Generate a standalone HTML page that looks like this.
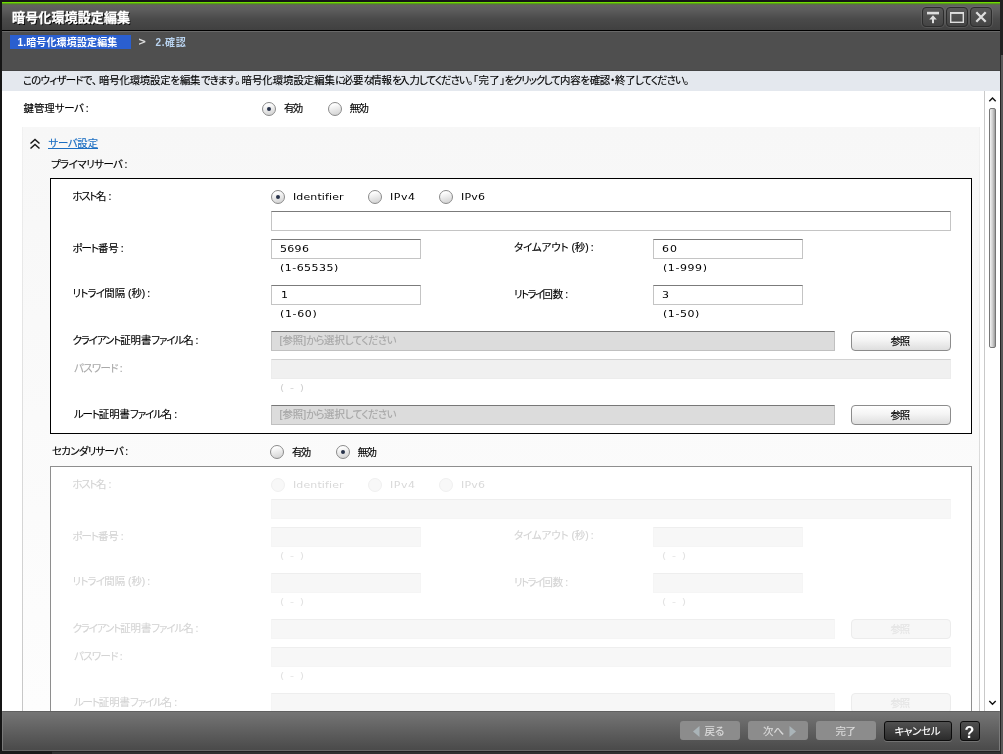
<!DOCTYPE html>
<html lang="ja">
<head>
<meta charset="utf-8">
<title>暗号化環境設定編集</title>
<style>
html,body{margin:0;padding:0;}
body{width:1003px;height:754px;overflow:hidden;background:#151515;position:relative;
 font-family:"Liberation Sans","Noto Sans CJK JP",sans-serif;font-size:11px;color:#000;}
div,svg{position:absolute;box-sizing:border-box;}
.t{white-space:nowrap;line-height:14px;height:14px;}
#win{left:2px;top:2px;width:998px;height:749px;background:#fff;}
#bstrip{left:0;top:751px;width:1003px;height:3px;background:#303030;border-top:1px solid #202020;}
#bstrip2{left:0;top:751px;width:52px;height:3px;background:#1a1a1a;}
#titlebar{left:2px;top:2px;width:998px;height:28px;
 background:linear-gradient(#6fdc00 0,#6fdc00 1px,#5a9a20 1px,#5a9a20 2px,#5b6f45 2px,#5b6f45 3px,#626262 3px,#5c5c5c 8px,#4a4a4a 17px,#404040 28px);}
#titleline{left:2px;top:30px;width:998px;height:1px;background:#000;}
#crumb{left:2px;top:31px;width:998px;height:40px;background:#4f4f4f;border-top:1px solid #696969;border-bottom:1px solid #454545;}
#tab{left:10px;top:35px;width:121px;height:14px;background:#2a5fd0;}
#info{left:2px;top:71px;width:998px;height:20px;background:#e4e8ee;}
#footer{left:2px;top:711px;width:998px;height:40px;
 background:linear-gradient(#757575 0,#6e6e6e 6px,#5c5c5c 22px,#4b4b4b 37px);border:1px solid #7a7a7a;border-top-color:#606060;border-bottom-color:#686868;}
#rstrip{left:1000px;top:0;width:3px;height:754px;background:#585858;border-left:1px solid #262626;}
#rstrip2{left:1000px;top:0;width:3px;height:55px;background:#222;}
.wb{top:7px;width:22px;height:20px;border:1px solid #2c2c2c;border-radius:4px;background:linear-gradient(#5a5a5a,#444);box-shadow:0 0 0 1px rgba(120,120,120,.35);}
/* section */
#sec{left:22px;top:127px;width:958px;height:584px;background:linear-gradient(#f7f7f7,#fafafa 50%,#fdfdfd);}
.secb{top:127px;width:1px;height:584px;background:linear-gradient(#f1f1f1,#dedede 50%,#c6c6c6);}
.box{left:50px;width:922px;background:#fff;border:1px solid #000;}
.inp{height:20px;background:#fff;border:1px solid #c4c4c4;border-top-color:#7b7b7b;}
.inp.ro{background:#dcdcdc;border-color:#c0c0c0;border-top-color:#777;}
.inp.dis{background:#f0f0f0;border-color:#ececec;border-top-color:#d2d2d2;}
.inp.dd{background:#f7f7f7;border-color:#f5f5f5;border-top-color:#eeeeee;}
.btn{width:100px;height:20px;border:1px solid #8c8c8c;border-radius:4px;background:linear-gradient(#ffffff 0,#f4f4f4 45%,#dedede 100%);}
.btn.dd{border-color:#ececec;background:#f7f7f7;}
.rd{width:14px;height:14px;border-radius:50%;border:1px solid #8a8a8a;background:linear-gradient(165deg,#ffffff 15%,#e8e8e8 55%,#cfcfcf 100%);}
.rd.on::after{content:"";position:absolute;left:4px;top:4px;width:4px;height:4px;border-radius:50%;background:#27324a;}
.rd.dd{border-color:#f0f0f0;background:#f8f8f8;}
.fb{top:721px;height:19px;border-radius:3px;background:#8c8c8c;}
.fbk{top:721px;height:20px;border-radius:3px;border:1px solid #0c0c0c;background:linear-gradient(#515151,#2b2b2b);box-shadow:0 1px 0 rgba(255,255,255,.18);}
</style>
</head>
<body>
<div id="win"></div>
<div id="titlebar"></div>
<div id="titleline"></div>
<div id="crumb"></div>
<div id="tab"></div>
<div id="info"></div>
<div id="bstrip"></div><div id="bstrip2"></div><div id="rstrip"></div><div id="rstrip2"></div>

<!-- window buttons -->
<div class="wb" style="left:922px"></div>
<div class="wb" style="left:946px"></div>
<div class="wb" style="left:970px"></div>
<svg style="left:922px;top:7px" width="70" height="20" viewBox="0 0 70 20">
 <g fill="#dedede" stroke="none">
  <rect x="5" y="4.800" width="12" height="2.600"/>
  <rect x="10" y="11.500" width="2" height="4.700"/>
  <path d="M11 8.300l3.800 4.200h-7.600z"/>
 </g>
 <g fill="none" stroke="#dedede">
  <rect x="28.700" y="5.700" width="12.600" height="9.600" stroke-width="1.400"/>
  <path d="M28 6h14" stroke-width="1.800"/>
  <path d="M54.300 5.300l9.400 9.400M63.700 5.300l-9.400 9.400" stroke-width="2.300"/>
 </g>
</svg>

<!-- content -->
<div id="sec"></div><div class="secb" style="left:22px"></div><div class="secb" style="left:979px"></div>
<div class="rd on" style="left:262px;top:102px"></div>
<div class="rd" style="left:328px;top:102px"></div>
<svg style="left:29px;top:138px" width="12" height="12" viewBox="0 0 12 12"><path d="M1.500 5.500L6 1.500l4.500 4M1.500 10.500L6 6.500l4.500 4" fill="none" stroke="#1a1a1a" stroke-width="1.500"/></svg>
<div style="left:48px;top:148px;width:50px;height:1px;background:#1b6ec2"></div>

<!-- primary -->
<div class="box" style="top:178px;height:256px"></div>
<div class="rd on" style="left:271px;top:190px"></div>
<div class="rd" style="left:368px;top:190px"></div>
<div class="rd" style="left:439px;top:190px"></div>
<div class="inp" style="left:271px;top:211px;width:680px"></div>
<div class="inp" style="left:271px;top:239px;width:150px"></div>
<div class="inp" style="left:653px;top:239px;width:150px"></div>
<div class="inp" style="left:271px;top:285px;width:150px"></div>
<div class="inp" style="left:653px;top:285px;width:150px"></div>
<div class="inp ro" style="left:271px;top:331px;width:564px"></div>
<div class="btn" style="left:851px;top:331px"></div>
<div class="inp dis" style="left:271px;top:359px;width:680px"></div>
<div class="inp ro" style="left:271px;top:405px;width:564px"></div>
<div class="btn" style="left:851px;top:405px"></div>

<!-- secondary -->
<div class="rd" style="left:270px;top:445px"></div>
<div class="rd on" style="left:336px;top:445px"></div>
<div class="box" style="top:466px;height:256px;border-color:#8e8e8e"></div>
<div class="rd dd" style="left:271px;top:478px"></div>
<div class="rd dd" style="left:368px;top:478px"></div>
<div class="rd dd" style="left:439px;top:478px"></div>
<div class="inp dd" style="left:271px;top:499px;width:680px"></div>
<div class="inp dd" style="left:271px;top:527px;width:150px"></div>
<div class="inp dd" style="left:653px;top:527px;width:150px"></div>
<div class="inp dd" style="left:271px;top:573px;width:150px"></div>
<div class="inp dd" style="left:653px;top:573px;width:150px"></div>
<div class="inp dd" style="left:271px;top:619px;width:564px"></div>
<div class="btn dd" style="left:851px;top:619px"></div>
<div class="inp dd" style="left:271px;top:647px;width:680px"></div>
<div class="inp dd" style="left:271px;top:693px;width:564px"></div>
<div class="btn dd" style="left:851px;top:693px"></div>

<!-- scrollbar -->
<div style="left:980px;top:91px;width:20px;height:620px;background:#fff"></div>
<div style="left:984px;top:91px;width:1px;height:620px;background:#c9c9c9"></div>
<svg style="left:988px;top:96px" width="9" height="6" viewBox="0 0 9 6"><path d="M1.300 5.200L4.500 2l3.200 3.200" fill="none" stroke="#111" stroke-width="1.400"/></svg>
<svg style="left:988px;top:700px" width="9" height="6" viewBox="0 0 9 6"><path d="M1.300 1L4.500 4.200L7.700 1" fill="none" stroke="#111" stroke-width="1.400"/></svg>
<div style="left:989px;top:108px;width:7px;height:240px;border:1px solid #777;border-radius:2px;background:linear-gradient(90deg,#f4f4f4,#cfcfcf 50%,#9c9c9c)"></div>

<!-- footer -->
<div id="footer"></div>
<div class="fb" style="left:680px;width:60px"></div>
<div class="fb" style="left:748px;width:60px"></div>
<div class="fb" style="left:816px;width:60px"></div>
<div class="fbk" style="left:884px;width:68px"></div>
<div class="fbk" style="left:960px;width:20px"></div>
<svg style="left:693px;top:726px" width="7" height="11" viewBox="0 0 7 11"><path d="M6.500 0v11L0 5.500z" fill="#aab4b8"/></svg>
<svg style="left:789px;top:726px" width="7" height="11" viewBox="0 0 7 11"><path d="M0.500 0v11L7 5.500z" fill="#aab4b8"/></svg>

<div id="txt" style="left:0;top:0;width:1003px;height:754px;will-change:transform">
<div class="t" style="left:12.0px;top:11px;font-family:'Liberation Sans','Noto Sans CJK JP',sans-serif;font-size:13px;color:#fff;font-weight:bold;text-shadow:1px 1px 0 #000;-webkit-text-stroke:0.3px #fff;font-feature-settings:'palt';letter-spacing:0.125px;">暗号化環境設定編集</div>
<div class="t" style="left:17.5px;top:36px;font-family:'Liberation Sans','Noto Sans CJK JP',sans-serif;font-size:10px;color:#fff;font-weight:bold;font-feature-settings:'palt';letter-spacing:0.150px;">1.暗号化環境設定編集</div>
<div class="t" style="left:138.0px;top:35px;font-family:'DejaVu Sans','Noto Sans CJK JP',sans-serif;font-size:10px;color:#e0e0e0;font-weight:bold;letter-spacing:0.000px;">&gt;</div>
<div class="t" style="left:155.5px;top:36px;font-family:'Liberation Sans','Noto Sans CJK JP',sans-serif;font-size:10px;color:#b9d3ef;font-weight:bold;font-feature-settings:'palt';letter-spacing:0.633px;">2.確認</div>
<div class="t" style="left:23.0px;top:74px;font-family:'Liberation Sans','Noto Sans CJK JP',sans-serif;font-size:10.4px;color:#000;font-feature-settings:'palt';-webkit-text-stroke:0.15px;letter-spacing:0.000px;"><span style="letter-spacing:-0.713px">このウィザードで</span>、</div>
<div class="t" style="left:99.0px;top:74px;font-family:'Liberation Sans','Noto Sans CJK JP',sans-serif;font-size:10.4px;color:#000;font-feature-settings:'palt';-webkit-text-stroke:0.15px;letter-spacing:-0.178px;">暗号化環境設定を編集</div>
<div class="t" style="left:201.0px;top:74px;font-family:'Liberation Sans','Noto Sans CJK JP',sans-serif;font-size:10.4px;color:#000;font-feature-settings:'palt';-webkit-text-stroke:0.15px;letter-spacing:0.000px;"><span style="letter-spacing:-0.900px">できます</span>。</div>
<div class="t" style="left:241.5px;top:74px;font-family:'Liberation Sans','Noto Sans CJK JP',sans-serif;font-size:10.4px;color:#000;font-feature-settings:'palt';-webkit-text-stroke:0.15px;letter-spacing:0.000px;">暗号化環境設定編集<span style="letter-spacing:-2.400px">に</span>必要<span style="letter-spacing:-2.400px">な</span>情報<span style="letter-spacing:-2.400px">を</span>入力</div>
<div class="t" style="left:419.0px;top:74px;font-family:'Liberation Sans','Noto Sans CJK JP',sans-serif;font-size:10.4px;color:#000;font-feature-settings:'palt';-webkit-text-stroke:0.15px;letter-spacing:0.000px;"><span style="letter-spacing:-0.933px">してください</span>。</div>
<div class="t" style="left:473.0px;top:74px;font-family:'Liberation Sans','Noto Sans CJK JP',sans-serif;font-size:10.4px;color:#000;font-feature-settings:'palt';-webkit-text-stroke:0.15px;letter-spacing:0.333px;">「完了」</div>
<div class="t" style="left:504.5px;top:74px;font-family:'Liberation Sans','Noto Sans CJK JP',sans-serif;font-size:10.4px;color:#000;font-feature-settings:'palt';-webkit-text-stroke:0.15px;letter-spacing:0.000px;"><span style="letter-spacing:-1.100px">をクリックして</span></div>
<div class="t" style="left:560.0px;top:74px;font-family:'Liberation Sans','Noto Sans CJK JP',sans-serif;font-size:10.4px;color:#000;font-feature-settings:'palt';-webkit-text-stroke:0.15px;letter-spacing:-0.229px;">内容を確認・終了</div>
<div class="t" style="left:635.0px;top:74px;font-family:'Liberation Sans','Noto Sans CJK JP',sans-serif;font-size:10.4px;color:#000;font-feature-settings:'palt';-webkit-text-stroke:0.15px;letter-spacing:0.000px;"><span style="letter-spacing:-0.933px">してください</span>。</div>
<div class="t" style="left:23.5px;top:102px;font-family:'Liberation Sans','Noto Sans CJK JP',sans-serif;font-size:10.4px;color:#000;font-feature-settings:'palt';-webkit-text-stroke:0.15px;letter-spacing:0.000px;">鍵管理<span style="letter-spacing:-0.267px">サーバ</span><span style="margin-left:2px;letter-spacing:0">:</span></div>
<div class="t" style="left:284.0px;top:102px;font-family:'Liberation Sans','Noto Sans CJK JP',sans-serif;font-size:10.4px;color:#000;font-feature-settings:'palt';-webkit-text-stroke:0.15px;letter-spacing:-1.600px;">有効</div>
<div class="t" style="left:349.5px;top:102px;font-family:'Liberation Sans','Noto Sans CJK JP',sans-serif;font-size:10.4px;color:#000;font-feature-settings:'palt';-webkit-text-stroke:0.15px;letter-spacing:-1.300px;">無効</div>
<div class="t" style="left:48.5px;top:137px;font-family:'Liberation Sans','Noto Sans CJK JP',sans-serif;font-size:10.4px;color:#1b6ec2;font-feature-settings:'palt';-webkit-text-stroke:0.15px;letter-spacing:0.000px;"><span style="letter-spacing:-0.300px">サーバ</span>設定</div>
<div class="t" style="left:51.0px;top:158px;font-family:'Liberation Sans','Noto Sans CJK JP',sans-serif;font-size:10.4px;color:#000;font-feature-settings:'palt';-webkit-text-stroke:0.15px;letter-spacing:0.000px;"><span style="letter-spacing:-0.463px">プライマリサーバ</span><span style="margin-left:2px;letter-spacing:0">:</span></div>
<div class="t" style="left:72.5px;top:190px;font-family:'Liberation Sans','Noto Sans CJK JP',sans-serif;font-size:10.4px;color:#000;font-feature-settings:'palt';-webkit-text-stroke:0.15px;letter-spacing:0.000px;"><span style="letter-spacing:-1.267px">ホスト</span>名<span style="margin-left:2px;letter-spacing:0">:</span></div>
<div class="t" style="left:293.0px;top:190px;font-family:'DejaVu Sans','Noto Sans CJK JP',sans-serif;font-size:9.3px;color:#000;transform:scaleX(1.18);transform-origin:0 0;letter-spacing:0.113px;">Identifier</div>
<div class="t" style="left:389.5px;top:190px;font-family:'DejaVu Sans','Noto Sans CJK JP',sans-serif;font-size:9.3px;color:#000;transform:scaleX(1.18);transform-origin:0 0;letter-spacing:0.480px;">IPv4</div>
<div class="t" style="left:460.5px;top:190px;font-family:'DejaVu Sans','Noto Sans CJK JP',sans-serif;font-size:9.3px;color:#000;transform:scaleX(1.18);transform-origin:0 0;letter-spacing:0.198px;">IPv6</div>
<div class="t" style="left:72.5px;top:242px;font-family:'Liberation Sans','Noto Sans CJK JP',sans-serif;font-size:10.4px;color:#000;font-feature-settings:'palt';-webkit-text-stroke:0.15px;letter-spacing:0.000px;"><span style="letter-spacing:-0.933px">ポート</span>番号<span style="margin-left:2px;letter-spacing:0">:</span></div>
<div class="t" style="left:514.0px;top:241px;font-family:'Liberation Sans','Noto Sans CJK JP',sans-serif;font-size:10.4px;color:#000;font-feature-settings:'palt';-webkit-text-stroke:0.15px;letter-spacing:0.000px;"><span style="letter-spacing:-0.050px">タイムアウト</span> (秒)<span style="margin-left:2px;letter-spacing:0">:</span></div>
<div class="t" style="left:72.5px;top:287px;font-family:'Liberation Sans','Noto Sans CJK JP',sans-serif;font-size:10.4px;color:#000;font-feature-settings:'palt';-webkit-text-stroke:0.15px;letter-spacing:0.000px;"><span style="letter-spacing:-0.725px">リトライ</span>間隔 (秒)<span style="margin-left:2px;letter-spacing:0">:</span></div>
<div class="t" style="left:514.0px;top:288px;font-family:'Liberation Sans','Noto Sans CJK JP',sans-serif;font-size:10.4px;color:#000;font-feature-settings:'palt';-webkit-text-stroke:0.15px;letter-spacing:0.000px;"><span style="letter-spacing:-1.550px">リトライ</span>回数<span style="margin-left:2px;letter-spacing:0">:</span></div>
<div class="t" style="left:72.5px;top:334px;font-family:'Liberation Sans','Noto Sans CJK JP',sans-serif;font-size:10.4px;color:#000;font-feature-settings:'palt';-webkit-text-stroke:0.15px;letter-spacing:0.000px;"><span style="letter-spacing:-1.040px">クライアント</span>証明書<span style="letter-spacing:-1.040px">ファイル</span>名<span style="margin-left:2px;letter-spacing:0">:</span></div>
<div class="t" style="left:74.0px;top:362px;font-family:'Liberation Sans','Noto Sans CJK JP',sans-serif;font-size:10.4px;color:#a9a9a9;font-feature-settings:'palt';-webkit-text-stroke:0.15px;letter-spacing:0.000px;"><span style="letter-spacing:-0.620px">パスワード</span><span style="margin-left:2px;letter-spacing:0">:</span></div>
<div class="t" style="left:74.0px;top:408px;font-family:'Liberation Sans','Noto Sans CJK JP',sans-serif;font-size:10.4px;color:#000;font-feature-settings:'palt';-webkit-text-stroke:0.15px;letter-spacing:0.000px;"><span style="letter-spacing:-1.043px">ルート</span>証明書<span style="letter-spacing:-1.043px">ファイル</span>名<span style="margin-left:2px;letter-spacing:0">:</span></div>
<div class="t" style="left:279.5px;top:242px;font-family:'DejaVu Sans','Noto Sans CJK JP',sans-serif;font-size:9.3px;color:#000;transform:scaleX(1.18);transform-origin:0 0;letter-spacing:0.282px;">5696</div>
<div class="t" style="left:280.0px;top:261px;font-family:'DejaVu Sans','Noto Sans CJK JP',sans-serif;font-size:9.3px;color:#000;transform:scaleX(1.18);transform-origin:0 0;letter-spacing:0.403px;">(1-65535)</div>
<div class="t" style="left:661.5px;top:242px;font-family:'DejaVu Sans','Noto Sans CJK JP',sans-serif;font-size:9.3px;color:#000;transform:scaleX(1.18);transform-origin:0 0;letter-spacing:0.847px;">60</div>
<div class="t" style="left:662.5px;top:261px;font-family:'DejaVu Sans','Noto Sans CJK JP',sans-serif;font-size:9.3px;color:#000;transform:scaleX(1.18);transform-origin:0 0;letter-spacing:0.494px;">(1-999)</div>
<div class="t" style="left:280.5px;top:288px;font-family:'DejaVu Sans','Noto Sans CJK JP',sans-serif;font-size:9.3px;color:#000;transform:scaleX(1.18);transform-origin:0 0;letter-spacing:0.000px;">1</div>
<div class="t" style="left:280.0px;top:307px;font-family:'DejaVu Sans','Noto Sans CJK JP',sans-serif;font-size:9.3px;color:#000;transform:scaleX(1.18);transform-origin:0 0;letter-spacing:0.559px;">(1-60)</div>
<div class="t" style="left:662.0px;top:288px;font-family:'DejaVu Sans','Noto Sans CJK JP',sans-serif;font-size:9.3px;color:#000;transform:scaleX(1.18);transform-origin:0 0;letter-spacing:0.000px;">3</div>
<div class="t" style="left:662.5px;top:307px;font-family:'DejaVu Sans','Noto Sans CJK JP',sans-serif;font-size:9.3px;color:#000;transform:scaleX(1.18);transform-origin:0 0;letter-spacing:0.492px;">(1-50)</div>
<div class="t" style="left:279.5px;top:334px;font-family:'Liberation Sans','Noto Sans CJK JP',sans-serif;font-size:10.4px;color:#a6a6a6;font-feature-settings:'palt';-webkit-text-stroke:0.15px;letter-spacing:0.000px;">[参照]<span style="letter-spacing:-0.557px">から</span>選択<span style="letter-spacing:-0.557px">してください</span></div>
<div class="t" style="left:279.5px;top:408px;font-family:'Liberation Sans','Noto Sans CJK JP',sans-serif;font-size:10.4px;color:#a6a6a6;font-feature-settings:'palt';-webkit-text-stroke:0.15px;letter-spacing:0.000px;">[参照]<span style="letter-spacing:-0.557px">から</span>選択<span style="letter-spacing:-0.557px">してください</span></div>
<div class="t" style="left:280.0px;top:381px;font-family:'DejaVu Sans','Noto Sans CJK JP',sans-serif;font-size:9.3px;color:#cfcfcf;transform:scaleX(1.18);transform-origin:0 0;letter-spacing:0.953px;">( - )</div>
<div class="t" style="left:890.5px;top:335px;font-family:'Liberation Sans','Noto Sans CJK JP',sans-serif;font-size:10.4px;color:#000;font-feature-settings:'palt';-webkit-text-stroke:0.15px;letter-spacing:-1.100px;">参照</div>
<div class="t" style="left:890.5px;top:409px;font-family:'Liberation Sans','Noto Sans CJK JP',sans-serif;font-size:10.4px;color:#000;font-feature-settings:'palt';-webkit-text-stroke:0.15px;letter-spacing:-1.100px;">参照</div>
<div class="t" style="left:52.0px;top:445px;font-family:'Liberation Sans','Noto Sans CJK JP',sans-serif;font-size:10.4px;color:#000;font-feature-settings:'palt';-webkit-text-stroke:0.15px;letter-spacing:0.000px;"><span style="letter-spacing:-0.650px">セカンダリサーバ</span><span style="margin-left:2px;letter-spacing:0">:</span></div>
<div class="t" style="left:292.0px;top:446px;font-family:'Liberation Sans','Noto Sans CJK JP',sans-serif;font-size:10.4px;color:#000;font-feature-settings:'palt';-webkit-text-stroke:0.15px;letter-spacing:-1.600px;">有効</div>
<div class="t" style="left:357.5px;top:446px;font-family:'Liberation Sans','Noto Sans CJK JP',sans-serif;font-size:10.4px;color:#000;font-feature-settings:'palt';-webkit-text-stroke:0.15px;letter-spacing:-1.300px;">無効</div>
<div class="t" style="left:72.5px;top:478px;font-family:'Liberation Sans','Noto Sans CJK JP',sans-serif;font-size:10.4px;color:#d4d4d4;font-feature-settings:'palt';-webkit-text-stroke:0.15px;letter-spacing:0.000px;"><span style="letter-spacing:-1.267px">ホスト</span>名<span style="margin-left:2px;letter-spacing:0">:</span></div>
<div class="t" style="left:293.0px;top:478px;font-family:'DejaVu Sans','Noto Sans CJK JP',sans-serif;font-size:9.3px;color:#d9d9d9;transform:scaleX(1.18);transform-origin:0 0;letter-spacing:0.113px;">Identifier</div>
<div class="t" style="left:389.5px;top:478px;font-family:'DejaVu Sans','Noto Sans CJK JP',sans-serif;font-size:9.3px;color:#d9d9d9;transform:scaleX(1.18);transform-origin:0 0;letter-spacing:0.480px;">IPv4</div>
<div class="t" style="left:460.5px;top:478px;font-family:'DejaVu Sans','Noto Sans CJK JP',sans-serif;font-size:9.3px;color:#d9d9d9;transform:scaleX(1.18);transform-origin:0 0;letter-spacing:0.198px;">IPv6</div>
<div class="t" style="left:72.5px;top:530px;font-family:'Liberation Sans','Noto Sans CJK JP',sans-serif;font-size:10.4px;color:#d4d4d4;font-feature-settings:'palt';-webkit-text-stroke:0.15px;letter-spacing:0.000px;"><span style="letter-spacing:-0.933px">ポート</span>番号<span style="margin-left:2px;letter-spacing:0">:</span></div>
<div class="t" style="left:514.0px;top:529px;font-family:'Liberation Sans','Noto Sans CJK JP',sans-serif;font-size:10.4px;color:#d4d4d4;font-feature-settings:'palt';-webkit-text-stroke:0.15px;letter-spacing:0.000px;"><span style="letter-spacing:-0.050px">タイムアウト</span> (秒)<span style="margin-left:2px;letter-spacing:0">:</span></div>
<div class="t" style="left:72.5px;top:575px;font-family:'Liberation Sans','Noto Sans CJK JP',sans-serif;font-size:10.4px;color:#d4d4d4;font-feature-settings:'palt';-webkit-text-stroke:0.15px;letter-spacing:0.000px;"><span style="letter-spacing:-0.725px">リトライ</span>間隔 (秒)<span style="margin-left:2px;letter-spacing:0">:</span></div>
<div class="t" style="left:514.0px;top:576px;font-family:'Liberation Sans','Noto Sans CJK JP',sans-serif;font-size:10.4px;color:#d4d4d4;font-feature-settings:'palt';-webkit-text-stroke:0.15px;letter-spacing:0.000px;"><span style="letter-spacing:-1.550px">リトライ</span>回数<span style="margin-left:2px;letter-spacing:0">:</span></div>
<div class="t" style="left:72.5px;top:622px;font-family:'Liberation Sans','Noto Sans CJK JP',sans-serif;font-size:10.4px;color:#d4d4d4;font-feature-settings:'palt';-webkit-text-stroke:0.15px;letter-spacing:0.000px;"><span style="letter-spacing:-1.040px">クライアント</span>証明書<span style="letter-spacing:-1.040px">ファイル</span>名<span style="margin-left:2px;letter-spacing:0">:</span></div>
<div class="t" style="left:74.0px;top:650px;font-family:'Liberation Sans','Noto Sans CJK JP',sans-serif;font-size:10.4px;color:#d4d4d4;font-feature-settings:'palt';-webkit-text-stroke:0.15px;letter-spacing:0.000px;"><span style="letter-spacing:-0.620px">パスワード</span><span style="margin-left:2px;letter-spacing:0">:</span></div>
<div class="t" style="left:74.0px;top:696px;font-family:'Liberation Sans','Noto Sans CJK JP',sans-serif;font-size:10.4px;color:#d4d4d4;font-feature-settings:'palt';-webkit-text-stroke:0.15px;letter-spacing:0.000px;"><span style="letter-spacing:-1.043px">ルート</span>証明書<span style="letter-spacing:-1.043px">ファイル</span>名<span style="margin-left:2px;letter-spacing:0">:</span></div>
<div class="t" style="left:280.0px;top:549px;font-family:'DejaVu Sans','Noto Sans CJK JP',sans-serif;font-size:9.3px;color:#e2e2e2;transform:scaleX(1.18);transform-origin:0 0;letter-spacing:0.953px;">( - )</div>
<div class="t" style="left:662.0px;top:549px;font-family:'DejaVu Sans','Noto Sans CJK JP',sans-serif;font-size:9.3px;color:#e2e2e2;transform:scaleX(1.18);transform-origin:0 0;letter-spacing:0.953px;">( - )</div>
<div class="t" style="left:280.0px;top:595px;font-family:'DejaVu Sans','Noto Sans CJK JP',sans-serif;font-size:9.3px;color:#e2e2e2;transform:scaleX(1.18);transform-origin:0 0;letter-spacing:0.953px;">( - )</div>
<div class="t" style="left:662.0px;top:595px;font-family:'DejaVu Sans','Noto Sans CJK JP',sans-serif;font-size:9.3px;color:#e2e2e2;transform:scaleX(1.18);transform-origin:0 0;letter-spacing:0.953px;">( - )</div>
<div class="t" style="left:280.0px;top:669px;font-family:'DejaVu Sans','Noto Sans CJK JP',sans-serif;font-size:9.3px;color:#e2e2e2;transform:scaleX(1.18);transform-origin:0 0;letter-spacing:0.953px;">( - )</div>
<div class="t" style="left:890.5px;top:623px;font-family:'Liberation Sans','Noto Sans CJK JP',sans-serif;font-size:10.4px;color:#e4e4e4;font-feature-settings:'palt';-webkit-text-stroke:0.15px;letter-spacing:-1.100px;">参照</div>
<div class="t" style="left:890.5px;top:697px;font-family:'Liberation Sans','Noto Sans CJK JP',sans-serif;font-size:10.4px;color:#e4e4e4;font-feature-settings:'palt';-webkit-text-stroke:0.15px;letter-spacing:-1.100px;">参照</div>
<div class="t" style="left:704.5px;top:725px;font-family:'Liberation Sans','Noto Sans CJK JP',sans-serif;font-size:10.4px;color:#dcdcdc;font-feature-settings:'palt';-webkit-text-stroke:0.15px;letter-spacing:0.000px;">戻る</div>
<div class="t" style="left:763.0px;top:725px;font-family:'Liberation Sans','Noto Sans CJK JP',sans-serif;font-size:10.4px;color:#dcdcdc;font-feature-settings:'palt';-webkit-text-stroke:0.15px;letter-spacing:0.100px;">次へ</div>
<div class="t" style="left:835.5px;top:725px;font-family:'Liberation Sans','Noto Sans CJK JP',sans-serif;font-size:10.4px;color:#dcdcdc;font-feature-settings:'palt';-webkit-text-stroke:0.15px;letter-spacing:-0.300px;">完了</div>
<div class="t" style="left:894.5px;top:725px;font-family:'Liberation Sans','Noto Sans CJK JP',sans-serif;font-size:10.4px;color:#fff;font-feature-settings:'palt';-webkit-text-stroke:0.15px;letter-spacing:0.000px;"><span style="letter-spacing:-0.275px">キャンセル</span></div>
<div class="t" style="left:964.5px;top:726px;font-family:'Liberation Sans',sans-serif;font-size:16px;color:#fff;font-weight:bold;letter-spacing:0.000px;">?</div>
</div>
</body>
</html>
